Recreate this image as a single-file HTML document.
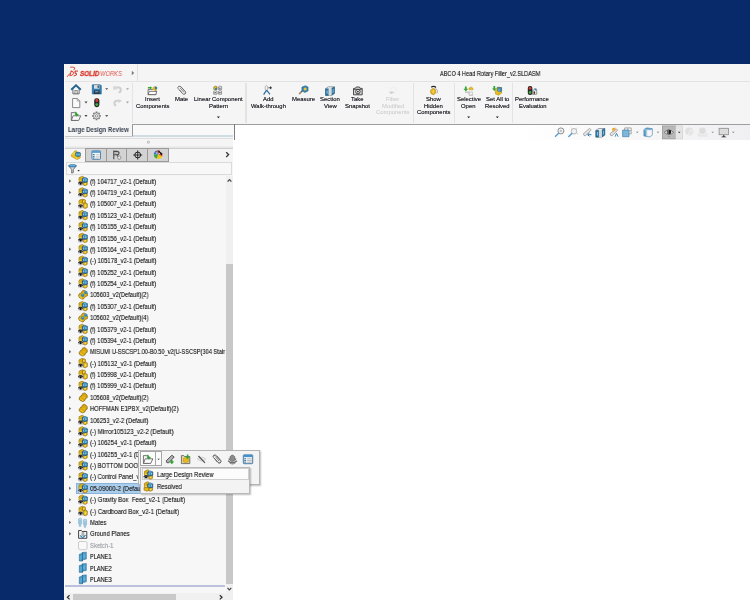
<!DOCTYPE html>
<html lang="en"><head><meta charset="utf-8"><title>SOLIDWORKS - ABCO 4 Head Rotary Filler_v2.SLDASM</title>
<style>
*{box-sizing:border-box;margin:0;padding:0}
html,body{width:750px;height:600px;overflow:hidden;background:#082a6a}
body{position:relative;font-family:"Liberation Sans",sans-serif;font-size:7px;color:#2a2a2a}
.a{position:absolute}
.t{will-change:transform;text-shadow:0 0 0 rgba(28,28,28,.5);position:absolute;white-space:nowrap;line-height:1;transform-origin:0 50%}
.c{will-change:transform;position:absolute;white-space:nowrap;text-align:center;transform-origin:50% 50%;line-height:6.8px}
svg{position:absolute;overflow:visible}
</style></head>
<body>
<div class="a" style="left:64px;top:64px;width:686px;height:536px;background:#f5f5f5;"></div>
<div class="a" style="left:64px;top:81px;width:686px;height:1px;background:#e3e3e3;"></div>
<div class="a" style="left:137px;top:64px;width:1px;height:17px;background:#e0e0e0;"></div>
<div class="a" style="left:233px;top:125px;width:517px;height:475px;background:#ffffff;"></div>
<div class="a" style="left:234px;top:125px;width:516px;height:14.6px;background:linear-gradient(90deg,#fff 0%,#fff 55%,#f2f2f4 92%,#f0f0f2 100%);"></div>
<div class="a" style="left:132px;top:124px;width:618px;height:1px;background:#9e9e9e;"></div>
<div class="t" style="left:439.70px;top:70px;font-size:7px;transform:scaleX(0.7957);color:#222;">ABCO 4 Head Rotary Filler_v2.SLDASM</div>
<div class="t" style="left:79.80px;top:71px;font-size:6.8px;transform:scaleX(0.9336);color:#da3428;font-weight:bold;font-style:italic;text-shadow:none;-webkit-text-stroke:.3px #da3428;">SOLID</div>
<div class="t" style="left:99.80px;top:71px;font-size:6.8px;transform:scaleX(0.8525);color:#e0564c;font-style:italic;text-shadow:none;">WORKS</div>
<div class="t" style="left:145.00px;top:97px;font-size:5.9px;transform:scaleX(1.0034);color:#1a1a22;text-shadow:0 0 0 rgba(26,26,34,.7);">Insert</div>
<div class="t" style="left:135.62px;top:104px;font-size:5.9px;transform:scaleX(1.0034);color:#1a1a22;text-shadow:0 0 0 rgba(26,26,34,.7);">Components</div>
<div class="t" style="left:174.72px;top:97px;font-size:5.9px;transform:scaleX(1.0034);color:#1a1a22;text-shadow:0 0 0 rgba(26,26,34,.7);">Mate</div>
<div class="t" style="left:194.05px;top:97px;font-size:5.9px;transform:scaleX(1.0034);color:#1a1a22;text-shadow:0 0 0 rgba(26,26,34,.7);">Linear Component</div>
<div class="t" style="left:208.86px;top:104px;font-size:5.9px;transform:scaleX(1.0034);color:#1a1a22;text-shadow:0 0 0 rgba(26,26,34,.7);">Pattern</div>
<div class="t" style="left:263.03px;top:97px;font-size:5.9px;transform:scaleX(1.0034);color:#1a1a22;text-shadow:0 0 0 rgba(26,26,34,.7);">Add</div>
<div class="t" style="left:250.81px;top:104px;font-size:5.9px;transform:scaleX(1.0034);color:#1a1a22;text-shadow:0 0 0 rgba(26,26,34,.7);">Walk-through</div>
<div class="t" style="left:292.18px;top:97px;font-size:5.9px;transform:scaleX(1.0034);color:#1a1a22;text-shadow:0 0 0 rgba(26,26,34,.7);">Measure</div>
<div class="t" style="left:320.43px;top:97px;font-size:5.9px;transform:scaleX(1.0034);color:#1a1a22;text-shadow:0 0 0 rgba(26,26,34,.7);">Section</div>
<div class="t" style="left:323.94px;top:104px;font-size:5.9px;transform:scaleX(1.0034);color:#1a1a22;text-shadow:0 0 0 rgba(26,26,34,.7);">View</div>
<div class="t" style="left:351.35px;top:97px;font-size:5.9px;transform:scaleX(1.0034);color:#1a1a22;text-shadow:0 0 0 rgba(26,26,34,.7);">Take</div>
<div class="t" style="left:345.09px;top:104px;font-size:5.9px;transform:scaleX(1.0034);color:#1a1a22;text-shadow:0 0 0 rgba(26,26,34,.7);">Snapshot</div>
<div class="t" style="left:386.12px;top:97px;font-size:5.9px;transform:scaleX(1.0034);color:#c6c6c6;text-shadow:none;">Filter</div>
<div class="t" style="left:381.51px;top:104px;font-size:5.9px;transform:scaleX(1.0034);color:#c6c6c6;text-shadow:none;">Modified</div>
<div class="t" style="left:375.92px;top:110px;font-size:5.9px;transform:scaleX(1.0034);color:#c6c6c6;text-shadow:none;">Components</div>
<div class="t" style="left:426.20px;top:97px;font-size:5.9px;transform:scaleX(1.0034);color:#1a1a22;text-shadow:0 0 0 rgba(26,26,34,.7);">Show</div>
<div class="t" style="left:424.22px;top:104px;font-size:5.9px;transform:scaleX(1.0034);color:#1a1a22;text-shadow:0 0 0 rgba(26,26,34,.7);">Hidden</div>
<div class="t" style="left:416.82px;top:110px;font-size:5.9px;transform:scaleX(1.0034);color:#1a1a22;text-shadow:0 0 0 rgba(26,26,34,.7);">Components</div>
<div class="t" style="left:456.69px;top:97px;font-size:5.9px;transform:scaleX(1.0034);color:#1a1a22;text-shadow:0 0 0 rgba(26,26,34,.7);">Selective</div>
<div class="t" style="left:461.46px;top:104px;font-size:5.9px;transform:scaleX(1.0034);color:#1a1a22;text-shadow:0 0 0 rgba(26,26,34,.7);">Open</div>
<div class="t" style="left:485.62px;top:97px;font-size:5.9px;transform:scaleX(1.0034);color:#1a1a22;text-shadow:0 0 0 rgba(26,26,34,.7);">Set All to</div>
<div class="t" style="left:484.96px;top:104px;font-size:5.9px;transform:scaleX(1.0034);color:#1a1a22;text-shadow:0 0 0 rgba(26,26,34,.7);">Resolved</div>
<div class="t" style="left:515.45px;top:97px;font-size:5.9px;transform:scaleX(1.0034);color:#1a1a22;text-shadow:0 0 0 rgba(26,26,34,.7);">Performance</div>
<div class="t" style="left:518.58px;top:104px;font-size:5.9px;transform:scaleX(1.0034);color:#1a1a22;text-shadow:0 0 0 rgba(26,26,34,.7);">Evaluation</div>
<div class="a" style="left:132px;top:83px;width:1.3px;height:40px;background:#e3e3e3;"></div>
<div class="a" style="left:245.4px;top:83px;width:1.3px;height:40px;background:#e3e3e3;"></div>
<div class="a" style="left:412.6px;top:83px;width:1.3px;height:40px;background:#e3e3e3;"></div>
<div class="a" style="left:453.6px;top:83px;width:1.3px;height:40px;background:#e3e3e3;"></div>
<div class="a" style="left:511.6px;top:83px;width:1.3px;height:40px;background:#e3e3e3;"></div>
<div class="t" style="left:68.00px;top:126px;font-size:7px;transform:scaleX(0.8635);color:#384050;font-weight:bold;text-shadow:none;">Large Design Review</div>
<div class="a" style="left:132px;top:125px;width:102px;height:11px;background:#f9f9f9;border-left:1px solid #9a9a9a;"></div>
<div class="a" style="left:234px;top:124px;width:1px;height:15.7px;background:#7c7c7c;"></div>
<div class="a" style="left:64px;top:135.5px;width:69px;height:1.4px;background:#c4c6c8;"></div>
<div class="a" style="left:133px;top:135.4px;width:100px;height:1.7px;background:#cfdce1;"></div>
<div class="a" style="left:64px;top:138.2px;width:169px;height:1px;background:#dedede;"></div>
<div class="a" style="left:64px;top:145.6px;width:169px;height:2.6px;background:linear-gradient(#f2f2f2,#e2e2e2);"></div>
<div class="a" style="left:65px;top:147.6px;width:168px;height:1.2px;background:#cfcfcf;"></div>
<div class="a" style="left:85px;top:148px;width:84px;height:14px;background:#d3d3d3;border:1px solid #999;"></div>
<div class="a" style="left:105.8px;top:149px;width:1px;height:12px;background:#999;"></div>
<div class="a" style="left:126.4px;top:149px;width:1px;height:12px;background:#999;"></div>
<div class="a" style="left:147.4px;top:149px;width:1px;height:12px;background:#999;"></div>
<div class="a" style="left:64px;top:64px;width:1.2px;height:536px;background:#fcfcfc;"></div>
<div class="a" style="left:65.6px;top:162px;width:166px;height:13px;background:#f8f8f8;border:1px solid #dadada;"></div>
<div class="a" style="left:64px;top:176px;width:161.5px;height:417.3px;overflow:hidden;background:#f7f7f7">
<div class="t" style="left:26.00px;top:2px;font-size:7.0px;transform:scaleX(0.8439);color:#202020;white-space:pre;">(f) 104717_v2-1 (Default)</div>
<div class="t" style="left:26.00px;top:13px;font-size:7.0px;transform:scaleX(0.8439);color:#202020;white-space:pre;">(f) 104719_v2-1 (Default)</div>
<div class="t" style="left:26.00px;top:24px;font-size:7.0px;transform:scaleX(0.8439);color:#202020;white-space:pre;">(f) 105007_v2-1 (Default)</div>
<div class="t" style="left:26.00px;top:36px;font-size:7.0px;transform:scaleX(0.8439);color:#202020;white-space:pre;">(f) 105123_v2-1 (Default)</div>
<div class="t" style="left:26.00px;top:47px;font-size:7.0px;transform:scaleX(0.8439);color:#202020;white-space:pre;">(f) 105155_v2-1 (Default)</div>
<div class="t" style="left:26.00px;top:59px;font-size:7.0px;transform:scaleX(0.8439);color:#202020;white-space:pre;">(f) 105156_v2-1 (Default)</div>
<div class="t" style="left:26.00px;top:70px;font-size:7.0px;transform:scaleX(0.8439);color:#202020;white-space:pre;">(f) 105164_v2-1 (Default)</div>
<div class="t" style="left:26.00px;top:81px;font-size:7.0px;transform:scaleX(0.8448);color:#202020;white-space:pre;">(-) 105178_v2-1 (Default)</div>
<div class="t" style="left:26.00px;top:93px;font-size:7.0px;transform:scaleX(0.8439);color:#202020;white-space:pre;">(f) 105252_v2-1 (Default)</div>
<div class="t" style="left:26.00px;top:104px;font-size:7.0px;transform:scaleX(0.8439);color:#202020;white-space:pre;">(f) 105254_v2-1 (Default)</div>
<div class="t" style="left:26.00px;top:115px;font-size:7.0px;transform:scaleX(0.8338);color:#202020;white-space:pre;">105603_v2(Default)(2)</div>
<div class="t" style="left:26.00px;top:127px;font-size:7.0px;transform:scaleX(0.8439);color:#202020;white-space:pre;">(f) 105307_v2-1 (Default)</div>
<div class="t" style="left:26.00px;top:138px;font-size:7.0px;transform:scaleX(0.8338);color:#202020;white-space:pre;">105602_v2(Default)(4)</div>
<div class="t" style="left:26.00px;top:150px;font-size:7.0px;transform:scaleX(0.8439);color:#202020;white-space:pre;">(f) 105379_v2-1 (Default)</div>
<div class="t" style="left:26.00px;top:161px;font-size:7.0px;transform:scaleX(0.8439);color:#202020;white-space:pre;">(f) 105394_v2-1 (Default)</div>
<div class="t" style="left:26.00px;top:172px;font-size:7.0px;transform:scaleX(0.8051);color:#202020;white-space:pre;">MISUMI U-SSCSP1.00-B0.50_v2(U-SSCSP(304 Stair</div>
<div class="t" style="left:26.00px;top:184px;font-size:7.0px;transform:scaleX(0.8448);color:#202020;white-space:pre;">(-) 105132_v2-1 (Default)</div>
<div class="t" style="left:26.00px;top:195px;font-size:7.0px;transform:scaleX(0.8439);color:#202020;white-space:pre;">(f) 105998_v2-1 (Default)</div>
<div class="t" style="left:26.00px;top:206px;font-size:7.0px;transform:scaleX(0.8439);color:#202020;white-space:pre;">(f) 105999_v2-1 (Default)</div>
<div class="t" style="left:26.00px;top:218px;font-size:7.0px;transform:scaleX(0.8338);color:#202020;white-space:pre;">105608_v2(Default)(2)</div>
<div class="t" style="left:26.00px;top:229px;font-size:7.0px;transform:scaleX(0.8355);color:#202020;white-space:pre;">HOFFMAN E1PBX_v2(Default)(2)</div>
<div class="t" style="left:26.00px;top:241px;font-size:7.0px;transform:scaleX(0.8384);color:#202020;white-space:pre;">106253_v2-2 (Default)</div>
<div class="t" style="left:26.00px;top:252px;font-size:7.0px;transform:scaleX(0.8630);color:#202020;white-space:pre;">(-) Mirror105123_v2-2 (Default)</div>
<div class="t" style="left:26.00px;top:263px;font-size:7.0px;transform:scaleX(0.8448);color:#202020;white-space:pre;">(-) 106254_v2-1 (Default)</div>
<div class="t" style="left:26.00px;top:275px;font-size:7.0px;transform:scaleX(0.8448);color:#202020;white-space:pre;">(-) 106255_v2-1 (Default)</div>
<div class="t" style="left:26.00px;top:286px;font-size:7.0px;transform:scaleX(0.8474);color:#202020;white-space:pre;">(-) BOTTOM DOOR_v2-1 (Default)</div>
<div class="t" style="left:26.00px;top:297px;font-size:7.0px;transform:scaleX(0.8435);color:#202020;white-space:pre;">(-) Control Panel_v2-1 (Default)</div>
<div class="a" style="left:12.400000000000006px;top:307.06px;width:70px;height:11.2px;background:#abcdec;border:1px solid #86b2dc"></div>
<div class="t" style="left:26.00px;top:309px;font-size:7.0px;transform:scaleX(0.8638);color:#202020;white-space:pre;">05-09000-2 (Default)</div>
<div class="t" style="left:26.00px;top:320px;font-size:7.0px;transform:scaleX(0.8539);color:#202020;white-space:pre;">(-) Gravity Box  Feed_v2-1 (Default)</div>
<div class="t" style="left:26.00px;top:332px;font-size:7.0px;transform:scaleX(0.8698);color:#202020;white-space:pre;">(-) Cardboard Box_v2-1 (Default)</div>
<div class="t" style="left:26.00px;top:343px;font-size:7.0px;transform:scaleX(0.8603);color:#202020;white-space:pre;">Mates</div>
<div class="t" style="left:26.00px;top:354px;font-size:7.0px;transform:scaleX(0.8480);color:#202020;white-space:pre;">Ground Planes</div>
<div class="t" style="left:26.00px;top:366px;font-size:7.0px;transform:scaleX(0.8471);color:#b4b8c0;white-space:pre;">Sketch-1</div>
<div class="t" style="left:26.00px;top:377px;font-size:7.0px;transform:scaleX(0.7970);color:#202020;white-space:pre;">PLANE1</div>
<div class="t" style="left:26.00px;top:389px;font-size:7.0px;transform:scaleX(0.7970);color:#202020;white-space:pre;">PLANE2</div>
<div class="t" style="left:26.00px;top:400px;font-size:7.0px;transform:scaleX(0.7970);color:#202020;white-space:pre;">PLANE3</div>
</div>
<div class="a" style="left:64px;top:176px;width:1.2px;height:424px;background:#fcfcfc;"></div>
<div class="a" style="left:225.6px;top:176px;width:7.4px;height:424px;background:#f0f0f0;"></div>
<div class="a" style="left:226px;top:264px;width:7px;height:319.7px;background:#c8c8c8;"></div>
<div class="a" style="left:65px;top:585.1px;width:160.4px;height:1.8px;background:#bdc0dc;"></div>
<div class="a" style="left:64px;top:593.3px;width:169px;height:6.7px;background:#f0f0f0;"></div>
<div class="a" style="left:73.3px;top:594px;width:103.2px;height:6px;background:#c9c9c9;"></div>
<svg class="ov" width="750" height="600" viewBox="0 0 750 600" style="left:0;top:0"><path d="M216.9 116.45h3l-1.5 1.7z" fill="#222"/><path d="M467.2 116.45h3l-1.5 1.7z" fill="#222"/><path d="M495.8 116.45h3l-1.5 1.7z" fill="#222"/><path d="M69 179.30L71.3 181.00L69 182.70z" fill="#747474"/><g transform="translate(78,176.1)"><path d="M1 1.7L2.4 1.1V.9L4.4.2L5.4.6V2L4.4 2.4V5.5H1Z" fill="#ecc01a" stroke="#73580a" stroke-width=".55"/><path d="M2.3 1.3H3.5V4.4H2.3Z" fill="#d8a40a"/><path d="M1.2 4.4H4.2V5.3H1.2Z" fill="#fbd93a"/><path d="M5.3 6L9.2 5.9V8.6L7.2 9.6L5.3 9Z" fill="#e8ba18" stroke="#73580a" stroke-width=".55"/><path d="M6.6 6.8L8 6.6V8.2L6.6 8.6Z" fill="#fbdf50"/><path d="M4.3 2.3L6.8 1.3L9.4 2.3V5.7L6.8 6.5L4.3 5.7Z" fill="#2a76a4" stroke="#154a68" stroke-width=".6"/><path d="M5.1 3.2L6.3 3V5.3L5.1 5Z M7.3 3L8.6 3.2V5L7.3 5.3Z" fill="#8ccaea"/><path d="M4.6 2.3L6.8 1.5L9.1 2.3L6.8 2.9Z" fill="#5aa8d4"/><ellipse cx="2.6" cy="7.8" rx="2.5" ry="2" fill="#adadad"/><path d="M1 9Q2.6 10 4.2 9" fill="none" stroke="#ececec" stroke-width=".7"/><path d="M.3 7.2Q2.6 5 4.9 7.2" fill="none" stroke="#303030" stroke-width="1.1"/><circle cx="2.6" cy="7.6" r="1" fill="#0c0c0c"/></g><path d="M69 190.68L71.3 192.38L69 194.08z" fill="#747474"/><g transform="translate(78,187.48)"><path d="M1 1.7L2.4 1.1V.9L4.4.2L5.4.6V2L4.4 2.4V5.5H1Z" fill="#ecc01a" stroke="#73580a" stroke-width=".55"/><path d="M2.3 1.3H3.5V4.4H2.3Z" fill="#d8a40a"/><path d="M1.2 4.4H4.2V5.3H1.2Z" fill="#fbd93a"/><path d="M5.3 6L9.2 5.9V8.6L7.2 9.6L5.3 9Z" fill="#e8ba18" stroke="#73580a" stroke-width=".55"/><path d="M6.6 6.8L8 6.6V8.2L6.6 8.6Z" fill="#fbdf50"/><path d="M4.3 2.3L6.8 1.3L9.4 2.3V5.7L6.8 6.5L4.3 5.7Z" fill="#2a76a4" stroke="#154a68" stroke-width=".6"/><path d="M5.1 3.2L6.3 3V5.3L5.1 5Z M7.3 3L8.6 3.2V5L7.3 5.3Z" fill="#8ccaea"/><path d="M4.6 2.3L6.8 1.5L9.1 2.3L6.8 2.9Z" fill="#5aa8d4"/><ellipse cx="2.6" cy="7.8" rx="2.5" ry="2" fill="#adadad"/><path d="M1 9Q2.6 10 4.2 9" fill="none" stroke="#ececec" stroke-width=".7"/><path d="M.3 7.2Q2.6 5 4.9 7.2" fill="none" stroke="#303030" stroke-width="1.1"/><circle cx="2.6" cy="7.6" r="1" fill="#0c0c0c"/></g><path d="M69 202.06L71.3 203.76L69 205.46z" fill="#747474"/><g transform="translate(78,198.86)"><path d="M1 1.7L2.4 1.1V.9L4.4.2L5.4.6V2L4.4 2.4V5.5H1Z" fill="#ecc01a" stroke="#73580a" stroke-width=".55"/><path d="M2.3 1.3H3.5V4.4H2.3Z" fill="#d8a40a"/><path d="M1.2 4.4H4.2V5.3H1.2Z" fill="#fbd93a"/><path d="M4.4 1.2L6.2.6L7.4 1.2V4L6 4.6L4.4 4Z" fill="#e8b816" stroke="#73580a" stroke-width=".55"/><path d="M5.2 2L6.2 1.8V3.6L5.2 3.4Z" fill="#fbe050"/><path d="M5.6 4.6L7.6 4L9.3 4.8V8.6L7.2 9.6L5.4 9Z" fill="#e8ba18" stroke="#73580a" stroke-width=".55"/><path d="M6.8 6L8.2 5.8V8L6.8 8.4Z" fill="#fbdf50"/><ellipse cx="2.6" cy="7.8" rx="2.5" ry="2" fill="#adadad"/><path d="M1 9Q2.6 10 4.2 9" fill="none" stroke="#ececec" stroke-width=".7"/><path d="M.3 7.2Q2.6 5 4.9 7.2" fill="none" stroke="#303030" stroke-width="1.1"/><circle cx="2.6" cy="7.6" r="1" fill="#0c0c0c"/></g><path d="M69 213.44L71.3 215.14L69 216.84z" fill="#747474"/><g transform="translate(78,210.24)"><path d="M1 1.7L2.4 1.1V.9L4.4.2L5.4.6V2L4.4 2.4V5.5H1Z" fill="#ecc01a" stroke="#73580a" stroke-width=".55"/><path d="M2.3 1.3H3.5V4.4H2.3Z" fill="#d8a40a"/><path d="M1.2 4.4H4.2V5.3H1.2Z" fill="#fbd93a"/><path d="M5.3 6L9.2 5.9V8.6L7.2 9.6L5.3 9Z" fill="#e8ba18" stroke="#73580a" stroke-width=".55"/><path d="M6.6 6.8L8 6.6V8.2L6.6 8.6Z" fill="#fbdf50"/><path d="M4.3 2.3L6.8 1.3L9.4 2.3V5.7L6.8 6.5L4.3 5.7Z" fill="#2a76a4" stroke="#154a68" stroke-width=".6"/><path d="M5.1 3.2L6.3 3V5.3L5.1 5Z M7.3 3L8.6 3.2V5L7.3 5.3Z" fill="#8ccaea"/><path d="M4.6 2.3L6.8 1.5L9.1 2.3L6.8 2.9Z" fill="#5aa8d4"/><ellipse cx="2.6" cy="7.8" rx="2.5" ry="2" fill="#adadad"/><path d="M1 9Q2.6 10 4.2 9" fill="none" stroke="#ececec" stroke-width=".7"/><path d="M.3 7.2Q2.6 5 4.9 7.2" fill="none" stroke="#303030" stroke-width="1.1"/><circle cx="2.6" cy="7.6" r="1" fill="#0c0c0c"/></g><path d="M69 224.82L71.3 226.52L69 228.22z" fill="#747474"/><g transform="translate(78,221.62)"><path d="M1 1.7L2.4 1.1V.9L4.4.2L5.4.6V2L4.4 2.4V5.5H1Z" fill="#ecc01a" stroke="#73580a" stroke-width=".55"/><path d="M2.3 1.3H3.5V4.4H2.3Z" fill="#d8a40a"/><path d="M1.2 4.4H4.2V5.3H1.2Z" fill="#fbd93a"/><path d="M5.3 6L9.2 5.9V8.6L7.2 9.6L5.3 9Z" fill="#e8ba18" stroke="#73580a" stroke-width=".55"/><path d="M6.6 6.8L8 6.6V8.2L6.6 8.6Z" fill="#fbdf50"/><path d="M4.3 2.3L6.8 1.3L9.4 2.3V5.7L6.8 6.5L4.3 5.7Z" fill="#2a76a4" stroke="#154a68" stroke-width=".6"/><path d="M5.1 3.2L6.3 3V5.3L5.1 5Z M7.3 3L8.6 3.2V5L7.3 5.3Z" fill="#8ccaea"/><path d="M4.6 2.3L6.8 1.5L9.1 2.3L6.8 2.9Z" fill="#5aa8d4"/><ellipse cx="2.6" cy="7.8" rx="2.5" ry="2" fill="#adadad"/><path d="M1 9Q2.6 10 4.2 9" fill="none" stroke="#ececec" stroke-width=".7"/><path d="M.3 7.2Q2.6 5 4.9 7.2" fill="none" stroke="#303030" stroke-width="1.1"/><circle cx="2.6" cy="7.6" r="1" fill="#0c0c0c"/></g><path d="M69 236.20L71.3 237.90L69 239.60z" fill="#747474"/><g transform="translate(78,233.0)"><path d="M1 1.7L2.4 1.1V.9L4.4.2L5.4.6V2L4.4 2.4V5.5H1Z" fill="#ecc01a" stroke="#73580a" stroke-width=".55"/><path d="M2.3 1.3H3.5V4.4H2.3Z" fill="#d8a40a"/><path d="M1.2 4.4H4.2V5.3H1.2Z" fill="#fbd93a"/><path d="M5.3 6L9.2 5.9V8.6L7.2 9.6L5.3 9Z" fill="#e8ba18" stroke="#73580a" stroke-width=".55"/><path d="M6.6 6.8L8 6.6V8.2L6.6 8.6Z" fill="#fbdf50"/><path d="M4.3 2.3L6.8 1.3L9.4 2.3V5.7L6.8 6.5L4.3 5.7Z" fill="#2a76a4" stroke="#154a68" stroke-width=".6"/><path d="M5.1 3.2L6.3 3V5.3L5.1 5Z M7.3 3L8.6 3.2V5L7.3 5.3Z" fill="#8ccaea"/><path d="M4.6 2.3L6.8 1.5L9.1 2.3L6.8 2.9Z" fill="#5aa8d4"/><ellipse cx="2.6" cy="7.8" rx="2.5" ry="2" fill="#adadad"/><path d="M1 9Q2.6 10 4.2 9" fill="none" stroke="#ececec" stroke-width=".7"/><path d="M.3 7.2Q2.6 5 4.9 7.2" fill="none" stroke="#303030" stroke-width="1.1"/><circle cx="2.6" cy="7.6" r="1" fill="#0c0c0c"/></g><path d="M69 247.58L71.3 249.28L69 250.98z" fill="#747474"/><g transform="translate(78,244.38)"><path d="M1 1.7L2.4 1.1V.9L4.4.2L5.4.6V2L4.4 2.4V5.5H1Z" fill="#ecc01a" stroke="#73580a" stroke-width=".55"/><path d="M2.3 1.3H3.5V4.4H2.3Z" fill="#d8a40a"/><path d="M1.2 4.4H4.2V5.3H1.2Z" fill="#fbd93a"/><path d="M5.3 6L9.2 5.9V8.6L7.2 9.6L5.3 9Z" fill="#e8ba18" stroke="#73580a" stroke-width=".55"/><path d="M6.6 6.8L8 6.6V8.2L6.6 8.6Z" fill="#fbdf50"/><path d="M4.3 2.3L6.8 1.3L9.4 2.3V5.7L6.8 6.5L4.3 5.7Z" fill="#2a76a4" stroke="#154a68" stroke-width=".6"/><path d="M5.1 3.2L6.3 3V5.3L5.1 5Z M7.3 3L8.6 3.2V5L7.3 5.3Z" fill="#8ccaea"/><path d="M4.6 2.3L6.8 1.5L9.1 2.3L6.8 2.9Z" fill="#5aa8d4"/><ellipse cx="2.6" cy="7.8" rx="2.5" ry="2" fill="#adadad"/><path d="M1 9Q2.6 10 4.2 9" fill="none" stroke="#ececec" stroke-width=".7"/><path d="M.3 7.2Q2.6 5 4.9 7.2" fill="none" stroke="#303030" stroke-width="1.1"/><circle cx="2.6" cy="7.6" r="1" fill="#0c0c0c"/></g><path d="M69 258.96L71.3 260.66L69 262.36z" fill="#747474"/><g transform="translate(78,255.76)"><path d="M1 1.7L2.4 1.1V.9L4.4.2L5.4.6V2L4.4 2.4V5.5H1Z" fill="#ecc01a" stroke="#73580a" stroke-width=".55"/><path d="M2.3 1.3H3.5V4.4H2.3Z" fill="#d8a40a"/><path d="M1.2 4.4H4.2V5.3H1.2Z" fill="#fbd93a"/><path d="M5.3 6L9.2 5.9V8.6L7.2 9.6L5.3 9Z" fill="#e8ba18" stroke="#73580a" stroke-width=".55"/><path d="M6.6 6.8L8 6.6V8.2L6.6 8.6Z" fill="#fbdf50"/><path d="M4.3 2.3L6.8 1.3L9.4 2.3V5.7L6.8 6.5L4.3 5.7Z" fill="#2a76a4" stroke="#154a68" stroke-width=".6"/><path d="M5.1 3.2L6.3 3V5.3L5.1 5Z M7.3 3L8.6 3.2V5L7.3 5.3Z" fill="#8ccaea"/><path d="M4.6 2.3L6.8 1.5L9.1 2.3L6.8 2.9Z" fill="#5aa8d4"/><ellipse cx="2.6" cy="7.8" rx="2.5" ry="2" fill="#adadad"/><path d="M1 9Q2.6 10 4.2 9" fill="none" stroke="#ececec" stroke-width=".7"/><path d="M.3 7.2Q2.6 5 4.9 7.2" fill="none" stroke="#303030" stroke-width="1.1"/><circle cx="2.6" cy="7.6" r="1" fill="#0c0c0c"/></g><path d="M69 270.34L71.3 272.04L69 273.74z" fill="#747474"/><g transform="translate(78,267.14)"><path d="M1 1.7L2.4 1.1V.9L4.4.2L5.4.6V2L4.4 2.4V5.5H1Z" fill="#ecc01a" stroke="#73580a" stroke-width=".55"/><path d="M2.3 1.3H3.5V4.4H2.3Z" fill="#d8a40a"/><path d="M1.2 4.4H4.2V5.3H1.2Z" fill="#fbd93a"/><path d="M5.3 6L9.2 5.9V8.6L7.2 9.6L5.3 9Z" fill="#e8ba18" stroke="#73580a" stroke-width=".55"/><path d="M6.6 6.8L8 6.6V8.2L6.6 8.6Z" fill="#fbdf50"/><path d="M4.3 2.3L6.8 1.3L9.4 2.3V5.7L6.8 6.5L4.3 5.7Z" fill="#2a76a4" stroke="#154a68" stroke-width=".6"/><path d="M5.1 3.2L6.3 3V5.3L5.1 5Z M7.3 3L8.6 3.2V5L7.3 5.3Z" fill="#8ccaea"/><path d="M4.6 2.3L6.8 1.5L9.1 2.3L6.8 2.9Z" fill="#5aa8d4"/><ellipse cx="2.6" cy="7.8" rx="2.5" ry="2" fill="#adadad"/><path d="M1 9Q2.6 10 4.2 9" fill="none" stroke="#ececec" stroke-width=".7"/><path d="M.3 7.2Q2.6 5 4.9 7.2" fill="none" stroke="#303030" stroke-width="1.1"/><circle cx="2.6" cy="7.6" r="1" fill="#0c0c0c"/></g><path d="M69 281.72L71.3 283.42L69 285.12z" fill="#747474"/><g transform="translate(78,278.52)"><path d="M1 1.7L2.4 1.1V.9L4.4.2L5.4.6V2L4.4 2.4V5.5H1Z" fill="#ecc01a" stroke="#73580a" stroke-width=".55"/><path d="M2.3 1.3H3.5V4.4H2.3Z" fill="#d8a40a"/><path d="M1.2 4.4H4.2V5.3H1.2Z" fill="#fbd93a"/><path d="M5.3 6L9.2 5.9V8.6L7.2 9.6L5.3 9Z" fill="#e8ba18" stroke="#73580a" stroke-width=".55"/><path d="M6.6 6.8L8 6.6V8.2L6.6 8.6Z" fill="#fbdf50"/><path d="M4.3 2.3L6.8 1.3L9.4 2.3V5.7L6.8 6.5L4.3 5.7Z" fill="#2a76a4" stroke="#154a68" stroke-width=".6"/><path d="M5.1 3.2L6.3 3V5.3L5.1 5Z M7.3 3L8.6 3.2V5L7.3 5.3Z" fill="#8ccaea"/><path d="M4.6 2.3L6.8 1.5L9.1 2.3L6.8 2.9Z" fill="#5aa8d4"/><ellipse cx="2.6" cy="7.8" rx="2.5" ry="2" fill="#adadad"/><path d="M1 9Q2.6 10 4.2 9" fill="none" stroke="#ececec" stroke-width=".7"/><path d="M.3 7.2Q2.6 5 4.9 7.2" fill="none" stroke="#303030" stroke-width="1.1"/><circle cx="2.6" cy="7.6" r="1" fill="#0c0c0c"/></g><path d="M69 293.10L71.3 294.80L69 296.50z" fill="#747474"/><g transform="translate(78,289.9)"><path d="M.5 5.4L1.6 3.6L3.4 3L4 1.2L6 .3L7.6 1V2.2L9.4 3.2V6L7.4 6.6L6 8.6L4.4 9.4L1.2 7.6Z" fill="#e0b012" stroke="#735606" stroke-width=".6"/><path d="M6.2 1.6L7.8.9L9.4 1.6V3.6L7.8 4.2L6.2 3.6Z" fill="#2a80b2"/><path d="M3.2 4.4L4.8 3.7L6.2 4.4V6.4L4.8 7L3.2 6.4Z" fill="#2a80b2"/><path d="M6.8 2L8.8 2.2M3.8 4.8L5.6 5" stroke="#7cc6e8" stroke-width=".6"/><path d="M1.4 6.4L4 8.4" stroke="#fbdc40" stroke-width=".9"/></g><path d="M69 304.48L71.3 306.18L69 307.88z" fill="#747474"/><g transform="translate(78,301.28)"><path d="M1 1.7L2.4 1.1V.9L4.4.2L5.4.6V2L4.4 2.4V5.5H1Z" fill="#ecc01a" stroke="#73580a" stroke-width=".55"/><path d="M2.3 1.3H3.5V4.4H2.3Z" fill="#d8a40a"/><path d="M1.2 4.4H4.2V5.3H1.2Z" fill="#fbd93a"/><path d="M5.3 6L9.2 5.9V8.6L7.2 9.6L5.3 9Z" fill="#e8ba18" stroke="#73580a" stroke-width=".55"/><path d="M6.6 6.8L8 6.6V8.2L6.6 8.6Z" fill="#fbdf50"/><path d="M4.3 2.3L6.8 1.3L9.4 2.3V5.7L6.8 6.5L4.3 5.7Z" fill="#2a76a4" stroke="#154a68" stroke-width=".6"/><path d="M5.1 3.2L6.3 3V5.3L5.1 5Z M7.3 3L8.6 3.2V5L7.3 5.3Z" fill="#8ccaea"/><path d="M4.6 2.3L6.8 1.5L9.1 2.3L6.8 2.9Z" fill="#5aa8d4"/><ellipse cx="2.6" cy="7.8" rx="2.5" ry="2" fill="#adadad"/><path d="M1 9Q2.6 10 4.2 9" fill="none" stroke="#ececec" stroke-width=".7"/><path d="M.3 7.2Q2.6 5 4.9 7.2" fill="none" stroke="#303030" stroke-width="1.1"/><circle cx="2.6" cy="7.6" r="1" fill="#0c0c0c"/></g><path d="M69 315.86L71.3 317.56L69 319.26z" fill="#747474"/><g transform="translate(78,312.66)"><path d="M.5 5.4L1.6 3.6L3.4 3L4 1.2L6 .3L7.6 1V2.2L9.4 3.2V6L7.4 6.6L6 8.6L4.4 9.4L1.2 7.6Z" fill="#e0b012" stroke="#735606" stroke-width=".6"/><path d="M6.2 1.6L7.8.9L9.4 1.6V3.6L7.8 4.2L6.2 3.6Z" fill="#2a80b2"/><path d="M3.2 4.4L4.8 3.7L6.2 4.4V6.4L4.8 7L3.2 6.4Z" fill="#2a80b2"/><path d="M6.8 2L8.8 2.2M3.8 4.8L5.6 5" stroke="#7cc6e8" stroke-width=".6"/><path d="M1.4 6.4L4 8.4" stroke="#fbdc40" stroke-width=".9"/></g><path d="M69 327.24L71.3 328.94L69 330.64z" fill="#747474"/><g transform="translate(78,324.04)"><path d="M1 1.7L2.4 1.1V.9L4.4.2L5.4.6V2L4.4 2.4V5.5H1Z" fill="#ecc01a" stroke="#73580a" stroke-width=".55"/><path d="M2.3 1.3H3.5V4.4H2.3Z" fill="#d8a40a"/><path d="M1.2 4.4H4.2V5.3H1.2Z" fill="#fbd93a"/><path d="M5.3 6L9.2 5.9V8.6L7.2 9.6L5.3 9Z" fill="#e8ba18" stroke="#73580a" stroke-width=".55"/><path d="M6.6 6.8L8 6.6V8.2L6.6 8.6Z" fill="#fbdf50"/><path d="M4.3 2.3L6.8 1.3L9.4 2.3V5.7L6.8 6.5L4.3 5.7Z" fill="#2a76a4" stroke="#154a68" stroke-width=".6"/><path d="M5.1 3.2L6.3 3V5.3L5.1 5Z M7.3 3L8.6 3.2V5L7.3 5.3Z" fill="#8ccaea"/><path d="M4.6 2.3L6.8 1.5L9.1 2.3L6.8 2.9Z" fill="#5aa8d4"/><ellipse cx="2.6" cy="7.8" rx="2.5" ry="2" fill="#adadad"/><path d="M1 9Q2.6 10 4.2 9" fill="none" stroke="#ececec" stroke-width=".7"/><path d="M.3 7.2Q2.6 5 4.9 7.2" fill="none" stroke="#303030" stroke-width="1.1"/><circle cx="2.6" cy="7.6" r="1" fill="#0c0c0c"/></g><path d="M69 338.62L71.3 340.32L69 342.02z" fill="#747474"/><g transform="translate(78,335.42)"><path d="M1 1.7L2.4 1.1V.9L4.4.2L5.4.6V2L4.4 2.4V5.5H1Z" fill="#ecc01a" stroke="#73580a" stroke-width=".55"/><path d="M2.3 1.3H3.5V4.4H2.3Z" fill="#d8a40a"/><path d="M1.2 4.4H4.2V5.3H1.2Z" fill="#fbd93a"/><path d="M5.3 6L9.2 5.9V8.6L7.2 9.6L5.3 9Z" fill="#e8ba18" stroke="#73580a" stroke-width=".55"/><path d="M6.6 6.8L8 6.6V8.2L6.6 8.6Z" fill="#fbdf50"/><path d="M4.3 2.3L6.8 1.3L9.4 2.3V5.7L6.8 6.5L4.3 5.7Z" fill="#2a76a4" stroke="#154a68" stroke-width=".6"/><path d="M5.1 3.2L6.3 3V5.3L5.1 5Z M7.3 3L8.6 3.2V5L7.3 5.3Z" fill="#8ccaea"/><path d="M4.6 2.3L6.8 1.5L9.1 2.3L6.8 2.9Z" fill="#5aa8d4"/><ellipse cx="2.6" cy="7.8" rx="2.5" ry="2" fill="#adadad"/><path d="M1 9Q2.6 10 4.2 9" fill="none" stroke="#ececec" stroke-width=".7"/><path d="M.3 7.2Q2.6 5 4.9 7.2" fill="none" stroke="#303030" stroke-width="1.1"/><circle cx="2.6" cy="7.6" r="1" fill="#0c0c0c"/></g><path d="M69 350.00L71.3 351.70L69 353.40z" fill="#747474"/><g transform="translate(78,346.8)"><path d="M1.2 5.8L2.6 3.6L4 3L4.4 1.4L6.4.6L7.8 1.4L9.2 3V5.4L7.6 6.2L6.8 8.2L5 9.2L3.4 8.8L1.4 7.4Z" fill="#dcaa10" stroke="#735606" stroke-width=".65"/><path d="M2.4 6.4L3.6 7.2M5.4 5L6.6 5.4M3.8 7.6L5.4 8.4" stroke="#fbd828" stroke-width="1"/><path d="M4.4 2.2L6.4 1.6L7.6 2.6" fill="none" stroke="#c8960a" stroke-width=".7"/></g><path d="M69 361.38L71.3 363.08L69 364.78z" fill="#747474"/><g transform="translate(78,358.18)"><path d="M1 1.7L2.4 1.1V.9L4.4.2L5.4.6V2L4.4 2.4V5.5H1Z" fill="#ecc01a" stroke="#73580a" stroke-width=".55"/><path d="M2.3 1.3H3.5V4.4H2.3Z" fill="#d8a40a"/><path d="M1.2 4.4H4.2V5.3H1.2Z" fill="#fbd93a"/><path d="M4.4 1.2L6.2.6L7.4 1.2V4L6 4.6L4.4 4Z" fill="#e8b816" stroke="#73580a" stroke-width=".55"/><path d="M5.2 2L6.2 1.8V3.6L5.2 3.4Z" fill="#fbe050"/><path d="M5.6 4.6L7.6 4L9.3 4.8V8.6L7.2 9.6L5.4 9Z" fill="#e8ba18" stroke="#73580a" stroke-width=".55"/><path d="M6.8 6L8.2 5.8V8L6.8 8.4Z" fill="#fbdf50"/><ellipse cx="2.6" cy="7.8" rx="2.5" ry="2" fill="#adadad"/><path d="M1 9Q2.6 10 4.2 9" fill="none" stroke="#ececec" stroke-width=".7"/><path d="M.3 7.2Q2.6 5 4.9 7.2" fill="none" stroke="#303030" stroke-width="1.1"/><circle cx="2.6" cy="7.6" r="1" fill="#0c0c0c"/></g><path d="M69 372.76L71.3 374.46L69 376.16z" fill="#747474"/><g transform="translate(78,369.56)"><path d="M1 1.7L2.4 1.1V.9L4.4.2L5.4.6V2L4.4 2.4V5.5H1Z" fill="#ecc01a" stroke="#73580a" stroke-width=".55"/><path d="M2.3 1.3H3.5V4.4H2.3Z" fill="#d8a40a"/><path d="M1.2 4.4H4.2V5.3H1.2Z" fill="#fbd93a"/><path d="M4.4 1.2L6.2.6L7.4 1.2V4L6 4.6L4.4 4Z" fill="#e8b816" stroke="#73580a" stroke-width=".55"/><path d="M5.2 2L6.2 1.8V3.6L5.2 3.4Z" fill="#fbe050"/><path d="M5.6 4.6L7.6 4L9.3 4.8V8.6L7.2 9.6L5.4 9Z" fill="#e8ba18" stroke="#73580a" stroke-width=".55"/><path d="M6.8 6L8.2 5.8V8L6.8 8.4Z" fill="#fbdf50"/><ellipse cx="2.6" cy="7.8" rx="2.5" ry="2" fill="#adadad"/><path d="M1 9Q2.6 10 4.2 9" fill="none" stroke="#ececec" stroke-width=".7"/><path d="M.3 7.2Q2.6 5 4.9 7.2" fill="none" stroke="#303030" stroke-width="1.1"/><circle cx="2.6" cy="7.6" r="1" fill="#0c0c0c"/></g><path d="M69 384.14L71.3 385.84L69 387.54z" fill="#747474"/><g transform="translate(78,380.94)"><path d="M1 1.7L2.4 1.1V.9L4.4.2L5.4.6V2L4.4 2.4V5.5H1Z" fill="#ecc01a" stroke="#73580a" stroke-width=".55"/><path d="M2.3 1.3H3.5V4.4H2.3Z" fill="#d8a40a"/><path d="M1.2 4.4H4.2V5.3H1.2Z" fill="#fbd93a"/><path d="M5.3 6L9.2 5.9V8.6L7.2 9.6L5.3 9Z" fill="#e8ba18" stroke="#73580a" stroke-width=".55"/><path d="M6.6 6.8L8 6.6V8.2L6.6 8.6Z" fill="#fbdf50"/><path d="M4.3 2.3L6.8 1.3L9.4 2.3V5.7L6.8 6.5L4.3 5.7Z" fill="#2a76a4" stroke="#154a68" stroke-width=".6"/><path d="M5.1 3.2L6.3 3V5.3L5.1 5Z M7.3 3L8.6 3.2V5L7.3 5.3Z" fill="#8ccaea"/><path d="M4.6 2.3L6.8 1.5L9.1 2.3L6.8 2.9Z" fill="#5aa8d4"/><ellipse cx="2.6" cy="7.8" rx="2.5" ry="2" fill="#adadad"/><path d="M1 9Q2.6 10 4.2 9" fill="none" stroke="#ececec" stroke-width=".7"/><path d="M.3 7.2Q2.6 5 4.9 7.2" fill="none" stroke="#303030" stroke-width="1.1"/><circle cx="2.6" cy="7.6" r="1" fill="#0c0c0c"/></g><path d="M69 395.52L71.3 397.22L69 398.92z" fill="#747474"/><g transform="translate(78,392.32)"><path d="M1.2 5.8L2.6 3.6L4 3L4.4 1.4L6.4.6L7.8 1.4L9.2 3V5.4L7.6 6.2L6.8 8.2L5 9.2L3.4 8.8L1.4 7.4Z" fill="#dcaa10" stroke="#735606" stroke-width=".65"/><path d="M2.4 6.4L3.6 7.2M5.4 5L6.6 5.4M3.8 7.6L5.4 8.4" stroke="#fbd828" stroke-width="1"/><path d="M4.4 2.2L6.4 1.6L7.6 2.6" fill="none" stroke="#c8960a" stroke-width=".7"/></g><path d="M69 406.90L71.3 408.60L69 410.30z" fill="#747474"/><g transform="translate(78,403.7)"><path d="M1.2 5.8L2.6 3.6L4 3L4.4 1.4L6.4.6L7.8 1.4L9.2 3V5.4L7.6 6.2L6.8 8.2L5 9.2L3.4 8.8L1.4 7.4Z" fill="#dcaa10" stroke="#735606" stroke-width=".65"/><path d="M2.4 6.4L3.6 7.2M5.4 5L6.6 5.4M3.8 7.6L5.4 8.4" stroke="#fbd828" stroke-width="1"/><path d="M4.4 2.2L6.4 1.6L7.6 2.6" fill="none" stroke="#c8960a" stroke-width=".7"/></g><path d="M69 418.28L71.3 419.98L69 421.68z" fill="#747474"/><g transform="translate(78,415.08)"><path d="M1 1.7L2.4 1.1V.9L4.4.2L5.4.6V2L4.4 2.4V5.5H1Z" fill="#ecc01a" stroke="#73580a" stroke-width=".55"/><path d="M2.3 1.3H3.5V4.4H2.3Z" fill="#d8a40a"/><path d="M1.2 4.4H4.2V5.3H1.2Z" fill="#fbd93a"/><path d="M5.3 6L9.2 5.9V8.6L7.2 9.6L5.3 9Z" fill="#e8ba18" stroke="#73580a" stroke-width=".55"/><path d="M6.6 6.8L8 6.6V8.2L6.6 8.6Z" fill="#fbdf50"/><path d="M4.3 2.3L6.8 1.3L9.4 2.3V5.7L6.8 6.5L4.3 5.7Z" fill="#2a76a4" stroke="#154a68" stroke-width=".6"/><path d="M5.1 3.2L6.3 3V5.3L5.1 5Z M7.3 3L8.6 3.2V5L7.3 5.3Z" fill="#8ccaea"/><path d="M4.6 2.3L6.8 1.5L9.1 2.3L6.8 2.9Z" fill="#5aa8d4"/><ellipse cx="2.6" cy="7.8" rx="2.5" ry="2" fill="#adadad"/><path d="M1 9Q2.6 10 4.2 9" fill="none" stroke="#ececec" stroke-width=".7"/><path d="M.3 7.2Q2.6 5 4.9 7.2" fill="none" stroke="#303030" stroke-width="1.1"/><circle cx="2.6" cy="7.6" r="1" fill="#0c0c0c"/></g><path d="M69 429.66L71.3 431.36L69 433.06z" fill="#747474"/><g transform="translate(78,426.46)"><path d="M1 1.7L2.4 1.1V.9L4.4.2L5.4.6V2L4.4 2.4V5.5H1Z" fill="#ecc01a" stroke="#73580a" stroke-width=".55"/><path d="M2.3 1.3H3.5V4.4H2.3Z" fill="#d8a40a"/><path d="M1.2 4.4H4.2V5.3H1.2Z" fill="#fbd93a"/><path d="M5.3 6L9.2 5.9V8.6L7.2 9.6L5.3 9Z" fill="#e8ba18" stroke="#73580a" stroke-width=".55"/><path d="M6.6 6.8L8 6.6V8.2L6.6 8.6Z" fill="#fbdf50"/><path d="M4.3 2.3L6.8 1.3L9.4 2.3V5.7L6.8 6.5L4.3 5.7Z" fill="#2a76a4" stroke="#154a68" stroke-width=".6"/><path d="M5.1 3.2L6.3 3V5.3L5.1 5Z M7.3 3L8.6 3.2V5L7.3 5.3Z" fill="#8ccaea"/><path d="M4.6 2.3L6.8 1.5L9.1 2.3L6.8 2.9Z" fill="#5aa8d4"/><ellipse cx="2.6" cy="7.8" rx="2.5" ry="2" fill="#adadad"/><path d="M1 9Q2.6 10 4.2 9" fill="none" stroke="#ececec" stroke-width=".7"/><path d="M.3 7.2Q2.6 5 4.9 7.2" fill="none" stroke="#303030" stroke-width="1.1"/><circle cx="2.6" cy="7.6" r="1" fill="#0c0c0c"/></g><path d="M69 441.04L71.3 442.74L69 444.44z" fill="#747474"/><g transform="translate(78,437.84)"><path d="M1 1.7L2.4 1.1V.9L4.4.2L5.4.6V2L4.4 2.4V5.5H1Z" fill="#ecc01a" stroke="#73580a" stroke-width=".55"/><path d="M2.3 1.3H3.5V4.4H2.3Z" fill="#d8a40a"/><path d="M1.2 4.4H4.2V5.3H1.2Z" fill="#fbd93a"/><path d="M5.3 6L9.2 5.9V8.6L7.2 9.6L5.3 9Z" fill="#e8ba18" stroke="#73580a" stroke-width=".55"/><path d="M6.6 6.8L8 6.6V8.2L6.6 8.6Z" fill="#fbdf50"/><path d="M4.3 2.3L6.8 1.3L9.4 2.3V5.7L6.8 6.5L4.3 5.7Z" fill="#2a76a4" stroke="#154a68" stroke-width=".6"/><path d="M5.1 3.2L6.3 3V5.3L5.1 5Z M7.3 3L8.6 3.2V5L7.3 5.3Z" fill="#8ccaea"/><path d="M4.6 2.3L6.8 1.5L9.1 2.3L6.8 2.9Z" fill="#5aa8d4"/><ellipse cx="2.6" cy="7.8" rx="2.5" ry="2" fill="#adadad"/><path d="M1 9Q2.6 10 4.2 9" fill="none" stroke="#ececec" stroke-width=".7"/><path d="M.3 7.2Q2.6 5 4.9 7.2" fill="none" stroke="#303030" stroke-width="1.1"/><circle cx="2.6" cy="7.6" r="1" fill="#0c0c0c"/></g><path d="M69 452.42L71.3 454.12L69 455.82z" fill="#747474"/><g transform="translate(78,449.22)"><path d="M1 1.7L2.4 1.1V.9L4.4.2L5.4.6V2L4.4 2.4V5.5H1Z" fill="#ecc01a" stroke="#73580a" stroke-width=".55"/><path d="M2.3 1.3H3.5V4.4H2.3Z" fill="#d8a40a"/><path d="M1.2 4.4H4.2V5.3H1.2Z" fill="#fbd93a"/><path d="M5.3 6L9.2 5.9V8.6L7.2 9.6L5.3 9Z" fill="#e8ba18" stroke="#73580a" stroke-width=".55"/><path d="M6.6 6.8L8 6.6V8.2L6.6 8.6Z" fill="#fbdf50"/><path d="M4.3 2.3L6.8 1.3L9.4 2.3V5.7L6.8 6.5L4.3 5.7Z" fill="#2a76a4" stroke="#154a68" stroke-width=".6"/><path d="M5.1 3.2L6.3 3V5.3L5.1 5Z M7.3 3L8.6 3.2V5L7.3 5.3Z" fill="#8ccaea"/><path d="M4.6 2.3L6.8 1.5L9.1 2.3L6.8 2.9Z" fill="#5aa8d4"/><ellipse cx="2.6" cy="7.8" rx="2.5" ry="2" fill="#adadad"/><path d="M1 9Q2.6 10 4.2 9" fill="none" stroke="#ececec" stroke-width=".7"/><path d="M.3 7.2Q2.6 5 4.9 7.2" fill="none" stroke="#303030" stroke-width="1.1"/><circle cx="2.6" cy="7.6" r="1" fill="#0c0c0c"/></g><path d="M69 463.80L71.3 465.50L69 467.20z" fill="#747474"/><g transform="translate(78,460.6)"><path d="M1 1.7L2.4 1.1V.9L4.4.2L5.4.6V2L4.4 2.4V5.5H1Z" fill="#ecc01a" stroke="#73580a" stroke-width=".55"/><path d="M2.3 1.3H3.5V4.4H2.3Z" fill="#d8a40a"/><path d="M1.2 4.4H4.2V5.3H1.2Z" fill="#fbd93a"/><path d="M5.3 6L9.2 5.9V8.6L7.2 9.6L5.3 9Z" fill="#e8ba18" stroke="#73580a" stroke-width=".55"/><path d="M6.6 6.8L8 6.6V8.2L6.6 8.6Z" fill="#fbdf50"/><path d="M4.3 2.3L6.8 1.3L9.4 2.3V5.7L6.8 6.5L4.3 5.7Z" fill="#2a76a4" stroke="#154a68" stroke-width=".6"/><path d="M5.1 3.2L6.3 3V5.3L5.1 5Z M7.3 3L8.6 3.2V5L7.3 5.3Z" fill="#8ccaea"/><path d="M4.6 2.3L6.8 1.5L9.1 2.3L6.8 2.9Z" fill="#5aa8d4"/><ellipse cx="2.6" cy="7.8" rx="2.5" ry="2" fill="#adadad"/><path d="M1 9Q2.6 10 4.2 9" fill="none" stroke="#ececec" stroke-width=".7"/><path d="M.3 7.2Q2.6 5 4.9 7.2" fill="none" stroke="#303030" stroke-width="1.1"/><circle cx="2.6" cy="7.6" r="1" fill="#0c0c0c"/></g><path d="M69 475.18L71.3 476.88L69 478.58z" fill="#747474"/><g transform="translate(78,471.98)"><path d="M1 1.7L2.4 1.1V.9L4.4.2L5.4.6V2L4.4 2.4V5.5H1Z" fill="#ecc01a" stroke="#73580a" stroke-width=".55"/><path d="M2.3 1.3H3.5V4.4H2.3Z" fill="#d8a40a"/><path d="M1.2 4.4H4.2V5.3H1.2Z" fill="#fbd93a"/><path d="M5.3 6L9.2 5.9V8.6L7.2 9.6L5.3 9Z" fill="#e8ba18" stroke="#73580a" stroke-width=".55"/><path d="M6.6 6.8L8 6.6V8.2L6.6 8.6Z" fill="#fbdf50"/><path d="M4.3 2.3L6.8 1.3L9.4 2.3V5.7L6.8 6.5L4.3 5.7Z" fill="#2a76a4" stroke="#154a68" stroke-width=".6"/><path d="M5.1 3.2L6.3 3V5.3L5.1 5Z M7.3 3L8.6 3.2V5L7.3 5.3Z" fill="#8ccaea"/><path d="M4.6 2.3L6.8 1.5L9.1 2.3L6.8 2.9Z" fill="#5aa8d4"/><ellipse cx="2.6" cy="7.8" rx="2.5" ry="2" fill="#adadad"/><path d="M1 9Q2.6 10 4.2 9" fill="none" stroke="#ececec" stroke-width=".7"/><path d="M.3 7.2Q2.6 5 4.9 7.2" fill="none" stroke="#303030" stroke-width="1.1"/><circle cx="2.6" cy="7.6" r="1" fill="#0c0c0c"/></g><path d="M69 486.56L71.3 488.26L69 489.96z" fill="#747474"/><g transform="translate(78,483.36)"><path d="M1 1.7L2.4 1.1V.9L4.4.2L5.4.6V2L4.4 2.4V5.5H1Z" fill="#ecc01a" stroke="#73580a" stroke-width=".55"/><path d="M2.3 1.3H3.5V4.4H2.3Z" fill="#d8a40a"/><path d="M1.2 4.4H4.2V5.3H1.2Z" fill="#fbd93a"/><path d="M5.3 6L9.2 5.9V8.6L7.2 9.6L5.3 9Z" fill="#e8ba18" stroke="#73580a" stroke-width=".55"/><path d="M6.6 6.8L8 6.6V8.2L6.6 8.6Z" fill="#fbdf50"/><path d="M4.3 2.3L6.8 1.3L9.4 2.3V5.7L6.8 6.5L4.3 5.7Z" fill="#2a76a4" stroke="#154a68" stroke-width=".6"/><path d="M5.1 3.2L6.3 3V5.3L5.1 5Z M7.3 3L8.6 3.2V5L7.3 5.3Z" fill="#8ccaea"/><path d="M4.6 2.3L6.8 1.5L9.1 2.3L6.8 2.9Z" fill="#5aa8d4"/><ellipse cx="2.6" cy="7.8" rx="2.5" ry="2" fill="#adadad"/><path d="M1 9Q2.6 10 4.2 9" fill="none" stroke="#ececec" stroke-width=".7"/><path d="M.3 7.2Q2.6 5 4.9 7.2" fill="none" stroke="#303030" stroke-width="1.1"/><circle cx="2.6" cy="7.6" r="1" fill="#0c0c0c"/></g><path d="M69 497.94L71.3 499.64L69 501.34z" fill="#747474"/><g transform="translate(78,494.74)"><path d="M1 1.7L2.4 1.1V.9L4.4.2L5.4.6V2L4.4 2.4V5.5H1Z" fill="#ecc01a" stroke="#73580a" stroke-width=".55"/><path d="M2.3 1.3H3.5V4.4H2.3Z" fill="#d8a40a"/><path d="M1.2 4.4H4.2V5.3H1.2Z" fill="#fbd93a"/><path d="M5.3 6L9.2 5.9V8.6L7.2 9.6L5.3 9Z" fill="#e8ba18" stroke="#73580a" stroke-width=".55"/><path d="M6.6 6.8L8 6.6V8.2L6.6 8.6Z" fill="#fbdf50"/><path d="M4.3 2.3L6.8 1.3L9.4 2.3V5.7L6.8 6.5L4.3 5.7Z" fill="#2a76a4" stroke="#154a68" stroke-width=".6"/><path d="M5.1 3.2L6.3 3V5.3L5.1 5Z M7.3 3L8.6 3.2V5L7.3 5.3Z" fill="#8ccaea"/><path d="M4.6 2.3L6.8 1.5L9.1 2.3L6.8 2.9Z" fill="#5aa8d4"/><ellipse cx="2.6" cy="7.8" rx="2.5" ry="2" fill="#adadad"/><path d="M1 9Q2.6 10 4.2 9" fill="none" stroke="#ececec" stroke-width=".7"/><path d="M.3 7.2Q2.6 5 4.9 7.2" fill="none" stroke="#303030" stroke-width="1.1"/><circle cx="2.6" cy="7.6" r="1" fill="#0c0c0c"/></g><path d="M69 509.32L71.3 511.02L69 512.72z" fill="#747474"/><g transform="translate(78,506.12)"><path d="M1 1.7L2.4 1.1V.9L4.4.2L5.4.6V2L4.4 2.4V5.5H1Z" fill="#ecc01a" stroke="#73580a" stroke-width=".55"/><path d="M2.3 1.3H3.5V4.4H2.3Z" fill="#d8a40a"/><path d="M1.2 4.4H4.2V5.3H1.2Z" fill="#fbd93a"/><path d="M4.4 1.2L6.2.6L7.4 1.2V4L6 4.6L4.4 4Z" fill="#e8b816" stroke="#73580a" stroke-width=".55"/><path d="M5.2 2L6.2 1.8V3.6L5.2 3.4Z" fill="#fbe050"/><path d="M5.6 4.6L7.6 4L9.3 4.8V8.6L7.2 9.6L5.4 9Z" fill="#e8ba18" stroke="#73580a" stroke-width=".55"/><path d="M6.8 6L8.2 5.8V8L6.8 8.4Z" fill="#fbdf50"/><ellipse cx="2.6" cy="7.8" rx="2.5" ry="2" fill="#adadad"/><path d="M1 9Q2.6 10 4.2 9" fill="none" stroke="#ececec" stroke-width=".7"/><path d="M.3 7.2Q2.6 5 4.9 7.2" fill="none" stroke="#303030" stroke-width="1.1"/><circle cx="2.6" cy="7.6" r="1" fill="#0c0c0c"/></g><path d="M69 520.70L71.3 522.40L69 524.10z" fill="#747474"/><g transform="translate(78,517.5)"><path d="M.5 1.6Q.5.6 2 .6Q3.6.6 3.6 1.6V6.4L2.8 7V8.6L2 9.2L1.2 8.6V7L.5 6.4Z" fill="#9cc6de" stroke="#7fb0cc" stroke-width=".5"/><path d="M1.4 1.6H2.8" stroke="#e8f2f8" stroke-width=".8"/><path d="M5.4 2.6Q5.4 1.6 7 1.6Q8.6 1.6 8.6 2.6V7.4L7.8 8V9.6L7 10.2L6.2 9.6V8L5.4 7.4Z" fill="#9cc6de" stroke="#7fb0cc" stroke-width=".5"/><path d="M6.4 2.6H7.8" stroke="#e8f2f8" stroke-width=".8"/></g><path d="M69 532.08L71.3 533.78L69 535.48z" fill="#747474"/><g transform="translate(78,528.88)"><path d="M.6 1.6H3.4L4.2 2.6H8.8V9.4H.6Z" fill="#f8f8f8" stroke="#444" stroke-width="1"/><path d="M3.8 3.4H6V7H3.8Z" fill="#b8b8b8" stroke="#888" stroke-width=".4"/><path d="M2.2 6.6L4.6 8.6L7.6 6.2L6.6 7.6L4.6 8.8L3 7.8Z" fill="#2a80b4" stroke="#2a80b4" stroke-width=".8"/></g><g transform="translate(78,540.26)"><rect x=".5" y="1.2" width="8.6" height="8.2" rx="1.6" fill="#f9f9f9" stroke="#c4c4c4" stroke-width=".9"/></g><g transform="translate(78,551.64)"><path d="M1.3 2.6L4.3 1.8V.9L8.3.5V7.4L4.5 8.2V9.3L1.3 9.4Z" fill="#4b9ecb" stroke="#2b6f96" stroke-width=".6"/><path d="M2.4 4L3.8 3.6V7.8L2.4 8Z M5.2 3L7.2 2.6V6L5.2 6.6Z" fill="#5fafdb"/><path d="M4.4.6V9.6" stroke="#24607f" stroke-width=".7"/></g><g transform="translate(78,563.02)"><path d="M1.3 2.6L4.3 1.8V.9L8.3.5V7.4L4.5 8.2V9.3L1.3 9.4Z" fill="#4b9ecb" stroke="#2b6f96" stroke-width=".6"/><path d="M2.4 4L3.8 3.6V7.8L2.4 8Z M5.2 3L7.2 2.6V6L5.2 6.6Z" fill="#5fafdb"/><path d="M4.4.6V9.6" stroke="#24607f" stroke-width=".7"/></g><g transform="translate(78,574.4)"><path d="M1.3 2.6L4.3 1.8V.9L8.3.5V7.4L4.5 8.2V9.3L1.3 9.4Z" fill="#4b9ecb" stroke="#2b6f96" stroke-width=".6"/><path d="M2.4 4L3.8 3.6V7.8L2.4 8Z M5.2 3L7.2 2.6V6L5.2 6.6Z" fill="#5fafdb"/><path d="M4.4.6V9.6" stroke="#24607f" stroke-width=".7"/></g><g transform="translate(71,84.5)"><path d="M1.9 4.6V9.3H8.1V4.6" fill="#fbfbfb" stroke="#5a5a5a" stroke-width=".9"/><rect x="3.9" y="6.1" width="2.3" height="3.2" fill="#e4e4e4" stroke="#6a6a6a" stroke-width=".7"/><path d="M.2 5.2L5 .7L9.8 5.2" fill="none" stroke="#22648f" stroke-width="1.9" stroke-linejoin="miter"/></g><g transform="translate(92,84.5)"><path d="M.3.3H8.3L9.3 1.3V9.5H.3Z" fill="#2f7fb8" stroke="#1c5a88" stroke-width=".6"/><rect x="2" y=".6" width="5.4" height="3.6" fill="#d9dde0"/><rect x="5.6" y="1" width="1.2" height="2.4" fill="#3a3a3a"/><rect x="2" y="6" width="5.6" height="3.3" fill="#2b2f36"/><rect x="3" y="6.8" width="3.4" height="1" fill="#9db4c6"/></g><path d="M105.2 88.3h3l-1.5 1.8z" fill="#555"/><g transform="translate(113,86)"><path d="M3.6 1.6H5.4Q7.8 1.6 7.8 4Q7.8 6.2 5.6 6.4" fill="none" stroke="#cfcfcf" stroke-width="2"/><path d="M.2 .2H3.8V3.6H.2Z" fill="#d6d6d6"/></g><path d="M126.0 88.3h3l-1.5 1.8z" fill="#a4a4a4"/><g transform="translate(72,98)"><path d="M.6.5H5.4L7.8 2.8V9.6H.6Z" fill="#fafafa" stroke="#707070" stroke-width=".8"/><path d="M5.2.6V3H7.6" fill="#e0e0e0" stroke="#808080" stroke-width=".6"/></g><path d="M84.5 101.6h3l-1.5 1.8z" fill="#444"/><g transform="translate(94,98)"><rect x=".2" y=".2" width="5.2" height="9" rx="2.4" fill="#2a2a2a"/><circle cx="2.8" cy="2.5" r="1.4" fill="#e23a2c"/><circle cx="2.8" cy="6.6" r="1.4" fill="#3fb33f"/></g><g transform="translate(113,99)"><path d="M5.6 1.8H4Q1.4 1.8 1.4 4.4Q1.4 6.2 3.2 6.6" fill="none" stroke="#cfcfcf" stroke-width="2"/><path d="M5.2 0L9 1.8L5.6 4.2Z" fill="#d2d2d2"/></g><path d="M126.0 101.6h3l-1.5 1.8z" fill="#a4a4a4"/><g transform="translate(70.5,111)"><path d="M.8 1.6H4L4.8 2.6H6.4V9.4H.8Z" fill="#f4f4f4" stroke="#555" stroke-width=".8"/><path d="M.9 9.4L2.6 4.8H10.2L8.2 9.4Z" fill="#fbfbfb" stroke="#555" stroke-width=".8"/><path d="M4.2.4Q6.6.4 6.8 3H8.4L6.2 5.6L4 3H5.4Q5.3 1.6 4.2 1.4Z" fill="#2fa52f"/></g><path d="M84.5 115.1h3l-1.5 1.8z" fill="#444"/><g transform="translate(92,111.3)"><path d="M7.40 4.60L8.80 4.60M6.55 6.65L7.54 7.64M4.50 7.50L4.50 8.90M2.45 6.65L1.46 7.64M1.60 4.60L0.20 4.60M2.45 2.55L1.46 1.56M4.50 1.70L4.50 0.30M6.55 2.55L7.54 1.56" stroke="#777" stroke-width="1.7" fill="none"/><circle cx="4.5" cy="4.6" r="3" fill="#f6f6f6" stroke="#777" stroke-width=".8"/><circle cx="4.5" cy="4.6" r="1.3" fill="#f2f2f2" stroke="#7a7a7a" stroke-width=".8"/></g><path d="M105.2 115.1h3l-1.5 1.8z" fill="#555"/><g transform="translate(147.5,86)"><path d="M.6 3.4H8.4V8.6H.6Z" fill="#f6f6f6" stroke="#555" stroke-width=".8"/><path d="M.6 8.6L1.8 5.4H9.2L8.2 8.6Z" fill="#fdfdfd" stroke="#4a4a4a" stroke-width=".7"/><path d="M.4 1H2.6V.2L4.6 1.8L2.6 3.4V2.6H.4Z" fill="#37a537"/><path d="M5 1.4L7 .2L9.6 1.2V3.6L7.4 4.8L5 3.8Z" fill="#e8b91c"/><path d="M7.2.2L9.6 1V3L7.6 3.4Z" fill="#2f7fb8"/></g><g transform="translate(177,85.6)"><path d="M1.2 3.2Q.2 1.6 1.6.8Q3 .2 4.2 1.4L8.4 6Q9.2 7.4 8 8.4Q6.6 9.2 5.6 8L2.2 4" fill="none" stroke="#5a5a5a" stroke-width=".9"/><path d="M3 2.2L7 6.8M1.6 3.4L5.2 7.6M4.4 1.8L8 6" fill="none" stroke="#7a7a7a" stroke-width=".8"/></g><g transform="translate(213.2,85.6)"><path d="M.5 1.4L2 .4L3.8 1V4H.5Z" fill="#ecc01c" stroke="#7a6410" stroke-width=".5"/><path d="M1.8 2.4L3.9 1.8V4.1H1.8Z" fill="#2a80b2"/><path d="M5.2 1.2L6.6.4L8.4 1V4H5.2Z" fill="#f8f8f8" stroke="#555" stroke-width=".6"/><path d="M6.2 1.6L7.8 2.6L6.2 3.4Z" fill="#3a3a3a"/><path d="M.5 5.8L2 5L3.8 5.6V8.6H.5Z" fill="#f8f8f8" stroke="#555" stroke-width=".6"/><path d="M1.5 6.2L3.2 7.2L1.5 8Z" fill="#3a3a3a"/><path d="M5.2 5.8L6.6 5L8.4 5.6V8.6H5.2Z" fill="#f8f8f8" stroke="#555" stroke-width=".6"/><path d="M6.2 6.2L7.8 7.2L6.2 8Z" fill="#3a3a3a"/></g><g transform="translate(263,85)"><ellipse cx="3.4" cy="3" rx="1.3" ry="2.6" fill="#f2f2f2" stroke="#999" stroke-width=".6"/><path d="M3.6 5.2L.6 9.6M3.6 5.2L7 9.4" stroke="#2b6d9b" stroke-width="1.2" fill="none"/><path d="M5.4 2.8H9M7.6 1.4V4.2" stroke="#333" stroke-width=".9"/></g><g transform="translate(298.5,85.5)"><path d="M3.4 1.6L7 .2L9.6 1.6V5.4L6.4 7L3.4 5.4Z" fill="#3583b4" stroke="#1f5f88" stroke-width=".5"/><circle cx="6.6" cy="3.6" r="1.5" fill="#f2c62a"/><path d="M3.6 5.6L.6 8.4" stroke="#555" stroke-width="1.4"/><path d="M2.6 6.6L.8 8.2" stroke="#e5b820" stroke-width=".8"/></g><g transform="translate(325,86)"><path d="M.6 2.6L3.4.8L9.4.8V7.4L6.6 9.4H.6Z" fill="#eef1f3" stroke="#5a6a74" stroke-width=".6"/><path d="M.6 2.8H3.6V9.4H.6Z" fill="#2b78a8" stroke="#1b526f" stroke-width=".5"/><path d="M1.6 4.4H2.6V7.8H1.6Z" fill="#8cc8e8"/><path d="M6.6 2.2L9.4.9V7.4L6.6 9.2Z" fill="#2b78a8" stroke="#1b526f" stroke-width=".5"/><path d="M7.6 3.4L8.6 3V6.6L7.6 7.2Z" fill="#7cbce0"/><path d="M3.6 2.8L6.6 2.2V9.2L3.6 9.4Z" fill="#d4dade"/></g><g transform="translate(353,86)"><path d="M.5 2.4H2.4L3.2 1H6.4L7.2 2.4H9.2V8.8H.5Z" fill="#d6d6d6" stroke="#3a3a3a" stroke-width=".9"/><path d="M1 2.8H8.8V4H1Z" fill="#6a6a6a"/><circle cx="4.9" cy="5.6" r="2.2" fill="#f2f2f2" stroke="#2e2e2e" stroke-width=".9"/><circle cx="4.9" cy="5.6" r=".9" fill="#2a2a2a"/></g><g transform="translate(388,86.5)"><circle cx="5.4" cy="3.2" r="2.8" fill="none" stroke="#ececec" stroke-width=".8"/><ellipse cx="3.6" cy="6" rx="3" ry="1.4" fill="#e4e4e4"/><path d="M2.2 5.6H5L3.6 7.4Z" fill="#c8c8c8"/></g><g transform="translate(429,85.8)"><path d="M2.2 1.4Q4.6-.4 7 1.6" fill="none" stroke="#222" stroke-width="1.3"/><path d="M1.4 4.6L3.6 2.6L6.2 3.2L7 6.6L4.8 9L2 8Z" fill="#e5b41c" stroke="#a07c0c" stroke-width=".5"/><path d="M6.4 2.6Q9.4 4 8 7.6" fill="#f2f2f2" stroke="#888" stroke-width=".7"/><path d="M3.4 4.6L5 4.2V7L3.6 7.2Z" fill="#f7d750"/></g><g transform="translate(463.5,86)"><path d="M1.4.4H3.2V2.8H4.6L2.4 5.4L0 2.8H1.4Z" fill="#37a537"/><path d="M5.4 2.2L7.4.8L9.6 2.4V3.8H5.4Z" fill="#e8bc2a" stroke="#b08c14" stroke-width=".4"/><path d="M1.6 6.2H5.8V9H9.4" fill="none" stroke="#9a9a9a" stroke-width=".8"/><rect x="5.6" y="6" width="3.6" height="3" fill="#f0f0f0" stroke="#aaa" stroke-width=".5"/></g><g transform="translate(492,85.6)"><path d="M1.4.4H3.2V2.8H4.6L2.4 5.4L0 2.8H1.4Z" fill="#37a537"/><path d="M3.4 4.2L5.4 1.6L9.6 2V7.6L6.6 9.6L3.4 8.4Z" fill="#e8bc1c" stroke="#a88610" stroke-width=".5"/><path d="M5.6 1.6L9.6 2V5.6L7 6.4L5.6 5.4Z" fill="#3a8cc0" stroke="#1f618c" stroke-width=".4"/><path d="M7 3.2V6.2" stroke="#cfe6f4" stroke-width=".5"/></g><g transform="translate(527.5,85.8)"><rect x=".3" y=".2" width="4.6" height="9" rx="2.1" fill="#2a2a2a"/><circle cx="2.6" cy="2.4" r="1.3" fill="#e23a2c"/><circle cx="2.6" cy="6.6" r="1.3" fill="#3fb33f"/><path d="M5.2 4.6L7.6 3.6L9.2 4.4V8.4L5.2 8.8Z" fill="#f4f4f4" stroke="#555" stroke-width=".6"/><path d="M6.6 2.2L9.6 3.2L8.2 5Z" fill="#2f7fb8"/><rect x="6" y="5.6" width="1.6" height="2.4" fill="#333"/></g><g transform="translate(554.7,127.3)"><circle cx="6.2" cy="3.6" r="3" fill="#f4f6f8" stroke="#8a8a8a" stroke-width="1"/><path d="M4 6L.8 9" stroke="#5a9fd2" stroke-width="1.5" stroke-linecap="round"/><path d="M5 3.6H7.4M6.2 2.4V4.8" stroke="#999" stroke-width=".6"/></g><g transform="translate(568,127.3)"><circle cx="6" cy="4" r="2.8" fill="#eef2f5" stroke="#b0b0b0" stroke-width=".9"/><path d="M3.8 6.2L.8 9.2" stroke="#5a9fd2" stroke-width="1.5" stroke-linecap="round"/><path d="M3 .4L4 1.4M9.6.4L8.6 1.4M10 6.8L9 6" stroke="#aaa" stroke-width=".7"/></g><g transform="translate(582,127.3)"><path d="M1.4 6.4L7.6 1L9.2 2.6L3.6 8.4Q1.6 9 1.4 6.4Z" fill="#e4e4e4" stroke="#9a9a9a" stroke-width=".8"/><path d="M9.4 7.4H6M7.4 5.8L5.6 7.4L7.4 9" stroke="#2f7fb8" stroke-width="1" fill="none"/></g><g transform="translate(595.3,127.7)"><path d="M.6 2.6L3.4.8L9.4.8V7.4L6.6 9.4H.6Z" fill="#eef1f3" stroke="#5a6a74" stroke-width=".6"/><path d="M.6 2.8H3.6V9.4H.6Z" fill="#2b78a8" stroke="#1b526f" stroke-width=".5"/><path d="M1.6 4.4H2.6V7.8H1.6Z" fill="#8cc8e8"/><path d="M6.6 2.2L9.4.9V7.4L6.6 9.2Z" fill="#2b78a8" stroke="#1b526f" stroke-width=".5"/><path d="M7.6 3.4L8.6 3V6.6L7.6 7.2Z" fill="#7cbce0"/><path d="M3.6 2.8L6.6 2.2V9.2L3.6 9.4Z" fill="#d4dade"/></g><g transform="translate(608.7,127.3)"><path d="M1.4 6.4L7.4 1.2L9 2.8L3.6 8.4Q1.6 9 1.4 6.4Z" fill="#e0e0e0" stroke="#9a9a9a" stroke-width=".8"/><path d="M3.6 1L6.6.2L5.6 2.4L7.6 2.2L4.4 4.8L5 3L3.2 3.2Z" fill="#f0a428"/><path d="M6.4 9.4L7.8 6L9.4 9.4" fill="none" stroke="#2f7fb8" stroke-width=".9"/></g><g transform="translate(622,127.3)"><path d="M2.6.6H9.2V6.6H2.6Z" fill="#f4f4f4" stroke="#8a8a8a" stroke-width=".7"/><path d="M5.8.6V6.6M2.6 3.4H9.2" stroke="#7a7a7a" stroke-width=".5"/><path d="M.6 2.8H7V9.4H.6Z" fill="#7fb6dc" stroke="#3c82b0" stroke-width=".7"/></g><path d="M636.0 131.70000000000002h2.6l-1.3 1.4z" fill="#777"/><g transform="translate(643.3,127.3)"><path d="M.6 2.2L3.4.6L9 1.4V7.8L6.2 9.6L.6 8.6Z" fill="#5fa3cf" stroke="#2f78a8" stroke-width=".6"/><path d="M3.4 2.4H9V7.8L6.2 9.4L3.4 8.8Z" fill="#f4f6f8" stroke="#9ab" stroke-width=".5"/><path d="M.6 2.2L3.4 2.8V9" fill="none" stroke="#cfe4f2" stroke-width=".6"/></g><path d="M656.7 131.70000000000002h2.6l-1.3 1.4z" fill="#777"/><rect x="662.3" y="125.9" width="13.4" height="13" fill="#b9b9b9" stroke="#8c8c8c" stroke-width=".6"/><rect x="675.7" y="125.9" width="7" height="13" fill="#e6e6e6" stroke="#c8c8c8" stroke-width=".5"/><g transform="translate(664,128)"><path d="M.2 4.4Q4.8-.6 9.6 4.4Q4.8 8.6 .2 4.4Z" fill="#f4f4f4" stroke="#555" stroke-width=".7"/><circle cx="5" cy="4" r="2.3" fill="#1a1a1a"/><path d="M5 1.7A2.3 2.3 0 0 0 5 6.3Z" fill="#666"/><path d="M4 8.4H6" stroke="#777" stroke-width=".5"/></g><path d="M677.9000000000001 131.85h2.6l-1.3 1.5z" fill="#333"/><g transform="translate(684.7,127.3)"><circle cx="4.4" cy="4" r="3.8" fill="#e0e0e0"/><path d="M5.6 2.4L9.8 4.4L7.6 7.6L4.8 9.4L3.6 6Z" fill="#e6e6e6" stroke="#f4f4f4" stroke-width=".6"/></g><g transform="translate(697.3,127.3)"><circle cx="5.2" cy="3.6" r="3.4" fill="#dedede"/><path d="M.4 5.4L5.2 7.6L10.4 5.4V9.6H.4Z" fill="#e4e4e4" stroke="#f4f4f4" stroke-width=".6"/><path d="M2.4 8.4L4 7.4M8.4 8.4L6.8 7.4" stroke="#f6f6f6" stroke-width=".6"/></g><path d="M711.4000000000001 131.70000000000002h2.6l-1.3 1.4z" fill="#888"/><g transform="translate(718.7,127.89999999999999)"><rect x=".4" y=".4" width="9.4" height="6.4" fill="#dcdcdc" stroke="#8a8a8a" stroke-width=".8"/><path d="M3.4 9L5 6.8L6.8 9Z" fill="#3a3a3a"/><path d="M2.6 9.2H7.6" stroke="#555" stroke-width=".6"/></g><path d="M732.0 131.70000000000002h2.6l-1.3 1.4z" fill="#777"/><g transform="translate(71,150)"><path d="M.4 4.8L3.2 1.4L5.2.5L5.6 2.6L9.2 3V8L6 9.6L.4 6.4Z" fill="#eec21c" stroke="#a07e0c" stroke-width=".5"/><path d="M.8 5L3.4 2L4.6 4.6L5.8 8.8" fill="none" stroke="#f9e060" stroke-width=".8"/><path d="M4.6 2.7L7 2L9.3 2.8V6L6.9 6.8L4.6 6Z" fill="#2c80b0" stroke="#1a587c" stroke-width=".5"/><path d="M5.4 3.6L6.4 3.4V5.6L5.4 5.4Z M7.4 3.4L8.6 3.6V5.4L7.4 5.6Z" fill="#9ad6f2"/></g><g transform="translate(91.4,150.4)"><rect x=".5" y=".5" width="8.6" height="8.4" rx=".8" fill="#f6f8fa" stroke="#3f78a8" stroke-width=".9"/><rect x=".5" y=".5" width="8.6" height="2" fill="#5a9fd0"/><path d="M1.4 4.2H3.2M1.4 6H3.2M1.4 7.6H3.2" stroke="#2f6f9f" stroke-width="1"/><path d="M4.2 4.2H8.2M4.2 6H8.2M4.2 7.6H8.2" stroke="#aaa" stroke-width=".6"/></g><g transform="translate(112.8,150.2)"><path d="M1 .4V9M1 1.2H4Q6.4 1.4 6.2 3.2Q6 4.6 4 4.6H1M4 4.6L6.8 8.8" fill="none" stroke="#484848" stroke-width="1.1"/><circle cx="6.4" cy="7.4" r="1.7" fill="#e4e4e4" stroke="#777" stroke-width=".7"/><rect x="2.4" y="2" width="1.6" height="1.6" fill="#f2f2f2" stroke="#999" stroke-width=".4"/></g><g transform="translate(133.2,150.4)"><circle cx="4.5" cy="4.6" r="2.9" fill="none" stroke="#222" stroke-width="1"/><path d="M4.5 0V9.2M0 4.6H9" stroke="#222" stroke-width=".9"/></g><g transform="translate(153.4,150)"><circle cx="4.8" cy="4.6" r="4.4" fill="#e0e0e0"/><path d="M4.8 4.6L3.6 .4A4.4 4.4 0 0 0 .4 4.6Z" fill="#2f6fc4"/><path d="M4.8 4.6L.4 4.6A4.4 4.4 0 0 0 3.6 8.8Z" fill="#36a636"/><path d="M4.8 4.6L3.6 8.8A4.4 4.4 0 0 0 8.8 6.4Z" fill="#f2c41c"/><path d="M4.8 4.6L8.8 6.4A4.4 4.4 0 0 0 9 3.2Z" fill="#e0562c"/><path d="M4.8 4.6L3.6.4A4.4 4.4 0 0 1 6.4.5Z" fill="#d8342c"/><path d="M5.4 .6L9 3.6L8.2 5.6L4.8 1.6Z" fill="#1a1a1a"/><circle cx="3.2" cy="3" r="1" fill="#fff" opacity=".5"/></g><path d="M226.2 152.2L228.6 154.6L226.2 157" fill="none" stroke="#333" stroke-width="1.3"/><circle cx="148.4" cy="142.2" r="1.1" fill="none" stroke="#9c9c9c" stroke-width=".7"/><g transform="translate(68.2,164.3)"><path d="M.5 1.6L3.5 5.2V8.8L5.1 8.2V5.2L8.1 1.6Z" fill="#dcdcdc" stroke="#555" stroke-width=".8"/><ellipse cx="4.3" cy="1.5" rx="3.9" ry="1.3" fill="#4a96ce" stroke="#2c6c9c" stroke-width=".6"/><path d="M1.6 1.3Q4.3 .6 7 1.3" fill="none" stroke="#9fd0f0" stroke-width=".5"/></g><path d="M77.39999999999999 170.10000000000002h2.4l-1.2 1.4z" fill="#333"/><path d="M227.6 181.7L229.5 179.6L231.4 181.7" fill="none" stroke="#444" stroke-width="1.2"/><path d="M227.5 587.8L229.4 589.8L231.3 587.8" fill="none" stroke="#444" stroke-width="1.2"/><path d="M69.6 595.2L67.4 597.3L69.6 599.4" fill="none" stroke="#333" stroke-width="1.3"/><path d="M219.8 595.2L222 597.3L219.8 599.4" fill="none" stroke="#333" stroke-width="1.3"/><path d="M131.8 70.8L134.2 73L131.8 75.2Z" fill="#7a7a7a"/><g transform="translate(66.3,66.2)" fill="none" stroke="#dc3c30" stroke-linecap="round" stroke-linejoin="round"><path d="M4.2 .9Q7 .4 8.6 1.7L7.6 3.7" stroke-width=".9"/><path d="M4.9 5L3.5 9.5Q6.6 9.6 7.3 7Q7.5 5 4.9 5Z" stroke-width=".95"/><path d="M3.4 7.4L1 10.4" stroke-width=".9"/><path d="M11.2 4.9Q8.7 4.4 8.6 5.9Q8.8 6.9 10 7.4Q10.8 8.9 7.9 9.6" stroke-width="1.15"/></g></svg>
<div class="a" style="left:138px;top:449.5px;width:122px;height:35px;background:#f4f4f4;border:1px solid #b4b4b4;box-shadow:1px 1px 1.5px rgba(0,0,0,.25);"></div>
<div class="a" style="left:140.3px;top:451.4px;width:15.4px;height:14.8px;background:#fcfcfc;border:1px solid #a6a6a6;"></div>
<div class="a" style="left:155.5px;top:451.4px;width:6.8px;height:14.8px;background:#fcfcfc;border:1px solid #a6a6a6;border-left:none;"></div>
<div class="a" style="left:140px;top:467px;width:110px;height:26.6px;background:#f3f3f3;border:1px solid #b8b8b8;box-shadow:1px 1px 1.5px rgba(0,0,0,.25);"></div>
<div class="a" style="left:141.8px;top:468.3px;width:106.8px;height:12.2px;background:#fcfcfc;border:1px solid #cfcfcf;"></div>
<div class="t" style="left:156.5px;top:471.20px;font-size:7px;transform:scaleX(0.85);color:#222;">Large Design Review</div>
<div class="t" style="left:156.5px;top:483.00px;font-size:7px;transform:scaleX(0.85);color:#222;">Resolved</div>
<svg class="ov" width="750" height="600" viewBox="0 0 750 600" style="left:0;top:0"><g transform="translate(142.6,454)"><path d="M.8 1.6H4L4.8 2.6H6.4V9.4H.8Z" fill="#f4f4f4" stroke="#555" stroke-width=".8"/><path d="M.9 9.4L2.6 4.8H10.2L8.2 9.4Z" fill="#fbfbfb" stroke="#555" stroke-width=".8"/><path d="M4.2.4Q6.6.4 6.8 3H8.4L6.2 5.6L4 3H5.4Q5.3 1.6 4.2 1.4Z" fill="#2fa52f"/></g><path d="M157.4 458.7h2.4l-1.2 1.4z" fill="#333"/><g transform="translate(165.2,454.4)"><path d="M1 6.4L6.6 .8L9 2.6L3.6 8.4Q1 9 1 6.4Z" fill="#b0b0b0" stroke="#4a4a4a" stroke-width=".9"/><path d="M5.8 5.6H7.4V7.2H9L6.6 9.8L4.2 7.2H5.8Z" fill="#2fa52f"/></g><g transform="translate(180.8,454.4)"><path d="M.6 1.2H3L3.8 2.2H9V9.2H.6Z" fill="#e8d9a0" stroke="#555" stroke-width=".8"/><path d="M2.4 4L5 3.2L7.6 4.2V7.4L5 8.4L2.4 7.4Z" fill="#e8b91c" stroke="#a07c0c" stroke-width=".4"/><path d="M6 .2H7.6V2H9.2L6.8 4.6L4.4 2H6Z" fill="#2fa52f"/></g><g transform="translate(197,455.4)"><path d="M.4 3.6Q4.6-.2 8.8 3.6Q4.6 7.6 .4 3.6Z" fill="#e6e6e6" stroke="#c4c4c4" stroke-width=".7"/><path d="M1.4 .6L8 7.4" stroke="#555" stroke-width="1.2"/></g><g transform="translate(212.3,454.4)"><path d="M1.2 3.2Q.2 1.6 1.6.8Q3 .2 4.2 1.4L8.4 6Q9.2 7.4 8 8.4Q6.6 9.2 5.6 8L2.2 4" fill="none" stroke="#4a4a4a" stroke-width="1"/><path d="M3 2.2L7 6.8M1.6 3.4L5.2 7.6M4.4 1.8L8 6" fill="none" stroke="#6a6a6a" stroke-width=".9"/></g><g transform="translate(227.6,454.4)"><path d="M2.4 2.4Q4.8-1 7.2 2.4V4.6H8.6L4.8 7.6L1 4.6H2.4Z" fill="#8a8a8a" stroke="#555" stroke-width=".6"/><path d="M.6 6.4Q4.8 10.8 9.2 6.4" fill="none" stroke="#666" stroke-width="1.4"/><path d="M2 8.8Q4.8 10.8 7.8 8.8" fill="none" stroke="#888" stroke-width=".8"/></g><g transform="translate(242.8,454.4)"><rect x=".5" y=".5" width="9.4" height="8.8" rx=".8" fill="#f6f8fa" stroke="#2f6a98" stroke-width=".9"/><rect x=".5" y=".5" width="9.4" height="2.2" fill="#4a90c8"/><path d="M1.4 4.4H3.4M1.4 6.2H3.4M1.4 7.8H3.4" stroke="#2f6f9f" stroke-width="1"/><path d="M4.4 4.4H9M4.4 6.2H9M4.4 7.8H9" stroke="#999" stroke-width=".7"/></g><g transform="translate(143.4,469.6)"><path d="M1 1.7L2.4 1.1V.9L4.4.2L5.4.6V2L4.4 2.4V5.5H1Z" fill="#ecc01a" stroke="#73580a" stroke-width=".55"/><path d="M2.3 1.3H3.5V4.4H2.3Z" fill="#d8a40a"/><path d="M1.2 4.4H4.2V5.3H1.2Z" fill="#fbd93a"/><path d="M5.3 6L9.2 5.9V8.6L7.2 9.6L5.3 9Z" fill="#e8ba18" stroke="#73580a" stroke-width=".55"/><path d="M6.6 6.8L8 6.6V8.2L6.6 8.6Z" fill="#fbdf50"/><path d="M4.3 2.3L6.8 1.3L9.4 2.3V5.7L6.8 6.5L4.3 5.7Z" fill="#2a76a4" stroke="#154a68" stroke-width=".6"/><path d="M5.1 3.2L6.3 3V5.3L5.1 5Z M7.3 3L8.6 3.2V5L7.3 5.3Z" fill="#8ccaea"/><path d="M4.6 2.3L6.8 1.5L9.1 2.3L6.8 2.9Z" fill="#5aa8d4"/><ellipse cx="2.6" cy="7.8" rx="2.5" ry="2" fill="#adadad"/><path d="M1 9Q2.6 10 4.2 9" fill="none" stroke="#ececec" stroke-width=".7"/><path d="M.3 7.2Q2.6 5 4.9 7.2" fill="none" stroke="#303030" stroke-width="1.1"/><circle cx="2.6" cy="7.6" r="1" fill="#0c0c0c"/></g><g transform="translate(143.4,481.6)"><path d="M1 1.7L2.4 1.1V.9L4.4.2L5.4.6V2L4.4 2.4V5.5H1Z" fill="#ecc01a" stroke="#73580a" stroke-width=".55"/><path d="M2.3 1.3H3.5V4.4H2.3Z" fill="#d8a40a"/><path d="M1.2 4.4H4.2V5.3H1.2Z" fill="#fbd93a"/><path d="M5.3 6L9.2 5.9V8.6L7.2 9.6L5.3 9Z" fill="#e8ba18" stroke="#73580a" stroke-width=".55"/><path d="M6.6 6.8L8 6.6V8.2L6.6 8.6Z" fill="#fbdf50"/><path d="M4.3 2.3L6.8 1.3L9.4 2.3V5.7L6.8 6.5L4.3 5.7Z" fill="#2a76a4" stroke="#154a68" stroke-width=".6"/><path d="M5.1 3.2L6.3 3V5.3L5.1 5Z M7.3 3L8.6 3.2V5L7.3 5.3Z" fill="#8ccaea"/><path d="M4.6 2.3L6.8 1.5L9.1 2.3L6.8 2.9Z" fill="#5aa8d4"/><path d="M.6 6L5.3 6V9L3.4 9.6L.6 8.4Z" fill="#e8ba18" stroke="#73580a" stroke-width=".55"/></g></svg>
</body></html>
